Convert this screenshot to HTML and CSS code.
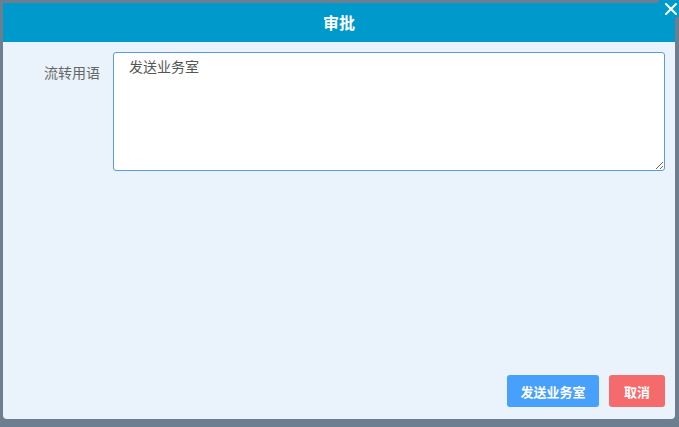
FILE: index.html
```html
<!DOCTYPE html>
<html lang="zh-CN">
<head>
	<meta charset="UTF-8">
	<title>审批</title>
	<link rel="stylesheet" href="styles.css">
</head>
<body>
	<section class="dialog">
		<header class="dialogHead">
			<h3>审批</h3>
			<a class="closeBtn" href="javascript:;">
				<svg width="12" height="12" viewBox="0 0 12 12"><path d="M1 1L11 11M11 1L1 11" stroke="#fff" stroke-width="2" stroke-linecap="round"/></svg>
			</a>
		</header>
		<section class="dialogBody">
			<div class="formRow">
				<label class="formLabel">流转用语</label>
				<textarea class="formText">发送业务室</textarea>
			</div>
		</section>
		<footer class="dialogFoot">
			<input type="button" value="发送业务室" class="btn btnBlue">
			<input type="button" value="取消" class="btn btnRed">
		</footer>
	</section>
</body>
</html>
```

FILE: styles.css
```css
body{
	margin:0;
	height:427px;
	overflow:hidden;
	background:#6d7e8e;
	font-family:"Microsoft YaHei","Noto Sans CJK SC",sans-serif;
}
h3{
	margin:0;
}
input,textarea{
	outline:none;
	font-family:inherit;
}
.dialog{
	position:relative;
	display:flex;
	flex-direction:column;
	width:672px;
	height:416px;
	margin:3px 0 0 3px;
	background:#eaf2fb;
	border-radius:0 0 4px 4px;
}
.dialogHead{
	height:39px;
	line-height:39px;
	text-align:center;
	background:#0099cc;
}
.dialogHead h3{
	font-size:16px;
	font-weight:bold;
	color:#fff;
}
.closeBtn{
	position:absolute;
	top:-10px;
	right:-9px;
	width:26px;
	height:26px;
	border-radius:50%;
	background:#0099cc;
	display:flex;
	align-items:center;
	justify-content:center;
}
.closeBtn svg{
	margin-top:6px;
}
.dialogBody{
	flex:1;
	padding:10px 10px 0;
}
.formRow{
	display:flex;
}
.formLabel{
	width:87px;
	padding-top:10px;
	text-align:right;
	font-size:14px;
	line-height:20px;
	color:#666;
}
.formText{
	flex:1;
	height:119px;
	margin-left:13px;
	padding:2px 15px;
	box-sizing:border-box;
	border:1px solid #5b9be3;
	border-radius:3px;
	background:#fff;
	font-size:14px;
	line-height:22px;
	color:#555;
}
.dialogFoot{
	display:flex;
	justify-content:flex-end;
	gap:10px;
	padding:0 10px 12px;
}
.btn{
	height:32px;
	padding:0;
	border:0;
	border-radius:3px;
	font-size:13px;
	font-weight:bold;
	color:#fff;
	cursor:pointer;
}
.btnBlue{
	width:92px;
	background:#46a0fc;
}
.btnRed{
	width:56px;
	background:#f56b6b;
}
```
